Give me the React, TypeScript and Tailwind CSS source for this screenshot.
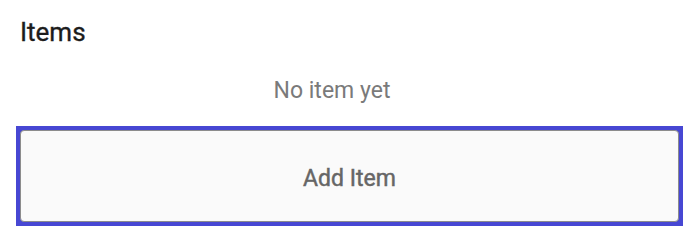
import React from "react";

function App() {
  return (
    <div className="w-[699px] h-[237px] bg-white px-5 font-['Roboto',sans-serif]">
      <h2 className="pt-[17px] text-[26px] leading-[30px] font-normal text-[#1c1c1c] [-webkit-text-stroke:0.35px_#1c1c1c]">
        Items
      </h2>
      <p className="mt-[30px] pr-[35px] text-center text-[23px] leading-7 text-[#7a7a7a]">
        No item yet
      </p>
      {/* focused button: square blue ring around the rounded button */}
      <div className="mt-[21px] -mx-1 p-1 bg-[#4747d3]">
        <button className="block w-full h-[92px] pt-[6px] rounded bg-[#fafafa] border border-[#8c8c8c] text-[23px] font-normal text-[#666666] [-webkit-text-stroke:0.45px_#666666]">
          Add Item
        </button>
      </div>
    </div>
  );
}

export default App;
